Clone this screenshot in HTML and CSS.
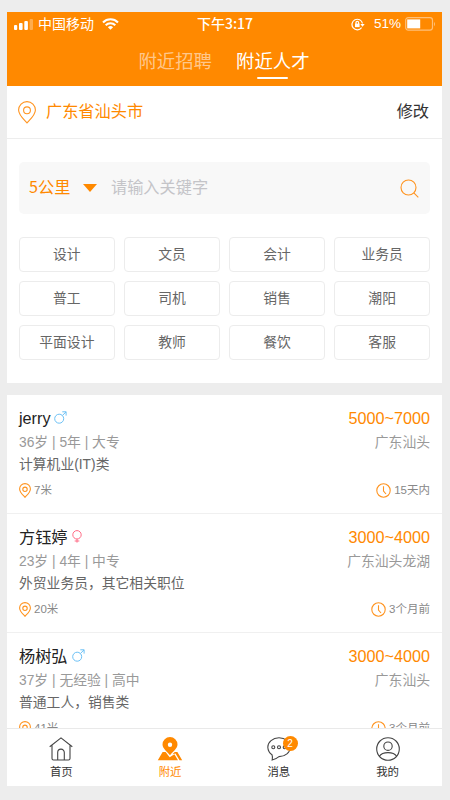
FILE: index.html
```html
<!DOCTYPE html>
<html lang="zh-CN">
<head>
<meta charset="utf-8">
<title>附近人才</title>
<link rel="stylesheet" href="styles.css">
</head>
<body>
<svg class="defs" width="0" height="0" aria-hidden="true">
  <symbol id="pin" viewBox="0 0 18 23"><path d="M9 22C6.700 19.200.6 14.200.6 9A8.400 8.400 0 0 1 17.400 9C17.400 14.200 11.300 19.200 9 22Z"/><circle cx="9" cy="9.300" r="3.400"/></symbol>
  <symbol id="pin-small" viewBox="0 0 12 15"><path d="M6 14.300C4.500 12.500.6 9.500.6 6A5.400 5.400 0 0 1 11.400 6C11.400 9.500 7.500 12.500 6 14.300Z"/><circle cx="6" cy="6.300" r="2.200"/></symbol>
  <symbol id="clock" viewBox="0 0 15 15"><circle cx="7.500" cy="7.500" r="6.700"/><path d="M7.500 3.200V8L10 11"/></symbol>
  <symbol id="male" viewBox="0 0 13 13"><circle cx="5.200" cy="7.700" r="4.500"/><path d="M8.400 4.500L12 .9M8.300.8H12.100V4.600"/></symbol>
  <symbol id="female" viewBox="0 0 13 13"><circle cx="5" cy="4.800" r="4.200"/><path d="M5 9V12.600M2.700 11H7.300"/></symbol>
</svg>
<main class="phone">
  <header class="top">
    <div class="status">
      <div class="status-left">
        <svg width="20" height="12" viewBox="0 0 20 12" fill="#fff"><rect x="0" y="7" width="3.200" height="5" rx="1"/><rect x="5" y="5" width="3.600" height="7" rx="1"/><rect x="10.300" y="3" width="3.600" height="9" rx="1"/><rect x="15.600" y="1" width="3.400" height="11" rx="1" opacity=".3"/></svg>
        <span class="carrier">中国移动</span>
        <svg width="17" height="12" viewBox="0 0 17 12" fill="none" stroke="#fff" stroke-width="2.100"><path d="M1 4.400A10.600 10.600 0 0 1 16 4.400"/><path d="M3.700 7.300A6.800 6.800 0 0 1 13.300 7.300"/><path d="M8.500 11.800L5.900 9.300A3.700 3.700 0 0 1 11.100 9.300Z" fill="#fff" stroke="none"/></svg>
      </div>
      <span class="time">下午3:17</span>
      <div class="status-right">
        <svg width="14" height="13" viewBox="0 0 14 13" fill="none" stroke="#fff" stroke-width="1.200"><path d="M10.600 9.700A5.300 5.300 0 1 1 11.500 5.500"/><path d="M9.300 6H13.700L11.500 8.800Z" fill="#fff" stroke="none"/><rect x="4" y="5.600" width="4.600" height="3.500" fill="#fff" stroke="none"/><path d="M5 6V4.600A1.300 1.300 0 0 1 7.600 4.600V6"/></svg>
        <span class="percent">51%</span>
        <svg width="31" height="14" viewBox="0 0 31 14"><rect x=".7" y=".7" width="26.800" height="12.400" rx="2.500" fill="none" stroke="#ffc078" stroke-width="1.200"/><rect x="2.200" y="2.400" width="13" height="9" fill="#fff"/><path d="M29 4.700Q31 7 29 9.200Z" fill="#ffc078"/></svg>
      </div>
    </div>
    <nav class="tabs"><span class="tab">附近招聘</span><span class="tab active">附近人才</span></nav>
  </header>

  <section class="location">
    <svg class="line-icon" width="18" height="23"><use href="#pin"/></svg>
    <span class="city">广东省汕头市</span>
    <span class="edit">修改</span>
  </section>

  <section class="filter">
    <div class="search">
      <span class="distance">5公里</span>
      <i class="caret"></i>
      <span class="placeholder">请输入关键字</span>
      <svg class="line-icon" width="19" height="19" viewBox="0 0 19 19"><circle cx="8.500" cy="8.500" r="7.500"/><path d="M13.800 13.800L18.300 18.300"/></svg>
    </div>
    <div class="chips">
      <span class="chip">设计</span><span class="chip">文员</span><span class="chip">会计</span><span class="chip">业务员</span>
      <span class="chip">普工</span><span class="chip">司机</span><span class="chip">销售</span><span class="chip">潮阳</span>
      <span class="chip">平面设计</span><span class="chip">教师</span><span class="chip">餐饮</span><span class="chip">客服</span>
    </div>
  </section>

  <section class="list">
    <article class="person">
      <div class="row name-row"><span>jerry</span><svg class="male" width="13" height="13"><use href="#male"/></svg><span class="salary">5000~7000</span></div>
      <div class="row info-row"><span>36岁 | 5年 | 大专</span><span>广东汕头</span></div>
      <div class="row job-row">计算机业(IT)类</div>
      <div class="row meta-row"><svg class="line-icon" width="12" height="15"><use href="#pin-small"/></svg><span>7米</span><svg class="line-icon clock" width="15" height="15"><use href="#clock"/></svg><span>15天内</span></div>
    </article>
    <article class="person">
      <div class="row name-row"><span>方钰婷</span><svg class="female" width="13" height="13"><use href="#female"/></svg><span class="salary">3000~4000</span></div>
      <div class="row info-row"><span>23岁 | 4年 | 中专</span><span>广东汕头龙湖</span></div>
      <div class="row job-row">外贸业务员，其它相关职位</div>
      <div class="row meta-row"><svg class="line-icon" width="12" height="15"><use href="#pin-small"/></svg><span>20米</span><svg class="line-icon clock" width="15" height="15"><use href="#clock"/></svg><span>3个月前</span></div>
    </article>
    <article class="person">
      <div class="row name-row"><span>杨树弘</span><svg class="male" width="13" height="13"><use href="#male"/></svg><span class="salary">3000~4000</span></div>
      <div class="row info-row"><span>37岁 | 无经验 | 高中</span><span>广东汕头</span></div>
      <div class="row job-row">普通工人，销售类</div>
      <div class="row meta-row"><svg class="line-icon" width="12" height="15"><use href="#pin-small"/></svg><span>41米</span><svg class="line-icon clock" width="15" height="15"><use href="#clock"/></svg><span>3个月前</span></div>
    </article>
  </section>

  <nav class="bottom">
    <a class="item"><svg width="24" height="24" viewBox="0 0 24 24"><path d="M.7 9.800L12 .9L23.300 9.800M3 8.200V21.500Q3 23 4.500 23H19.500Q21 23 21 21.500V8.200M8.700 23V15.400A3.300 3.300 0 0 1 15.300 15.400V23"/></svg><span>首页</span></a>
    <a class="item current"><svg width="26" height="24" viewBox="0 0 26 24"><path fill-rule="evenodd" d="M13 18.200C10.500 15.200 5.500 11.500 5.500 7.500A7.500 7.500 0 0 1 20.500 7.500C20.500 11.500 15.500 15.200 13 18.200ZM13 5.500A2.200 2.200 0 1 0 13 9.900A2.200 2.200 0 1 0 13 5.500Z"/><path d="M5.600 15H8.600L12.700 20.200L17.400 17.200L21 23.200H.8Z"/><path d="M17.700 15H20.400L25.200 23.200H22.500L18.500 16.500L15.500 17.200Z"/></svg><span>附近</span></a>
    <a class="item"><svg width="24" height="24" viewBox="0 0 24 24"><path d="M5 17.800A10 10 0 0 1 .8 10.200C.8 5 5.700.8 12 .8S23.200 5 23.200 10.200S18.300 19.600 12 19.600C10.500 20.800 8 22.500 5.200 23C5.800 21 5.600 19.500 5 17.800Z"/><circle cx="6.300" cy="10.300" r="1.500"/><circle cx="12" cy="10.300" r="1.500"/><circle cx="17.700" cy="10.300" r="1.500"/></svg><span>消息</span><b class="badge">2</b></a>
    <a class="item"><svg width="24" height="24" viewBox="0 0 24 24"><circle cx="12" cy="12" r="11.300"/><circle cx="12" cy="9.200" r="4.200"/><path d="M3.300 19.200C6.500 14.400 17.500 14.400 20.700 19.200"/></svg><span>我的</span></a>
  </nav>
</main>
</body>
</html>
```
FILE: styles.css
```css
* { box-sizing: border-box; }
body {
  margin: 0;
  height: 800px;
  padding: 12px 8px 14px 7px;
  background: #ededed;
  overflow: hidden;
  color: #333;
  font-family: "Liberation Sans", "Noto Sans CJK SC", sans-serif;
}
.defs { position: absolute; }
svg { display: block; flex: none; }
.phone { height: 774px; display: flex; flex-direction: column; background: #ededed; }
.top { height: 74px; flex: none; background: #ff8900; color: #fff; }
.status {
  display: grid;
  grid-template-columns: 1fr auto 1fr;
  align-items: center;
  height: 24px;
  padding: 0 6px 0 7px;
  font: 14px/22px "Noto Sans CJK SC", sans-serif;
}
.status-left, .status-right { display: flex; align-items: center; height: 24px; }
.carrier { margin: -2px 8px 0 4px; }
.time { margin-top: -2px; font-weight: 500; font-size: 14px; }
.status-right { justify-content: flex-end; }
.percent { margin: 0 4px 0 9px; font: 13.500px/24px "Liberation Sans", sans-serif; }
.tabs { display: flex; justify-content: center; gap: 24px; padding-right: 1px; }
.tab {
  display: flex;
  flex-direction: column;
  align-items: center;
  color: #ffc78a;
  font-size: 18.400px;
  line-height: 52px;
  height: 50px;
}
.tab.active { color: #fff; }
.tab.active::after { content: ""; flex: none; width: 31px; height: 2px; margin-top: -11px; border-radius: 1px; background: #fff; }
.location {
  display: flex;
  align-items: center;
  flex: none;
  height: 53px;
  padding: 0 13px 0 11px;
  background: #fff;
  border-bottom: 1px solid #ededed;
  font-size: 16.200px;
  line-height: 50px;
}
.city, .edit { height: 52px; }
.line-icon { fill: none; stroke: #ff9420; stroke-width: 1.100; }
.city { margin-left: 10px; color: #ff8900; }
.edit { margin-left: auto; }
.filter { flex: none; height: 244px; padding: 23px 12px 0; background: #fff; }
.search {
  display: flex;
  align-items: center;
  height: 52px;
  padding: 0 11px 0 10px;
  border-radius: 5px;
  background: #f8f8f8;
  font: 16.200px/48px "Noto Sans CJK SC", sans-serif;
}
.search span { height: 52px; }
.distance { width: 42px; color: #ff8900; white-space: nowrap; }
.caret { margin: 0 14px 0 12px; border: 7.500px solid transparent; border-top: 8px solid #ff8900; border-bottom: 0; }
.placeholder { color: #c4c4c8; }
.search .line-icon { margin-left: auto; }
.chips { display: grid; grid-template-columns: repeat(4, 1fr); gap: 9.400px; margin-top: 23px; }
.chip {
  height: 34.600px;
  border: 1px solid #ececec;
  border-radius: 4px;
  color: #666;
  font-size: 13.800px;
  line-height: 34px;
  text-align: center;
}
.list { flex: 1; min-height: 0; margin-top: 12px; overflow: hidden; background: #fff; }
.person { height: 119px; padding: 11px 12px 0; border-bottom: 1px solid #f0f0f0; }
.row { display: flex; align-items: center; height: 22px; line-height: 22px; font-size: 13.800px; white-space: nowrap; }
.name-row { height: 23px; margin-bottom: 3px; font-size: 16.200px; color: #222; }
.name-row svg { margin-left: 4px; fill: none; }
.male { stroke: #6cc1f5; }
.female { stroke: #ff6b85; }
.salary { margin-left: auto; color: #ff8900; }
.info-row { justify-content: space-between; color: #999; }
.job-row { color: #666; }
.meta-row { height: 20px; margin-top: 4px; color: #888; font-size: 11.500px; }
.meta-row span { margin-left: 3px; }
.meta-row .clock { margin-left: auto; }
.bottom { display: grid; grid-template-columns: repeat(4, 1fr); flex: none; height: 58px; background: #fff; border-top: 1px solid #e9e9e9; }
.item { position: relative; display: flex; flex-direction: column; align-items: center; padding-top: 8px; color: #333; font-size: 11.400px; line-height: 16px; }
.item svg { fill: none; stroke: #444; stroke-width: 1.100; }
.item span { margin-top: 3px; }
.item.current { color: #ff8900; }
.item.current svg { fill: #ff8900; stroke: none; }
.badge {
  position: absolute;
  left: 58px;
  top: 7px;
  width: 15px;
  height: 15px;
  border-radius: 50%;
  background: #ff8900;
  color: #fff;
  font-size: 10px;
  font-weight: 400;
  line-height: 15px;
  text-align: center;
}
```
